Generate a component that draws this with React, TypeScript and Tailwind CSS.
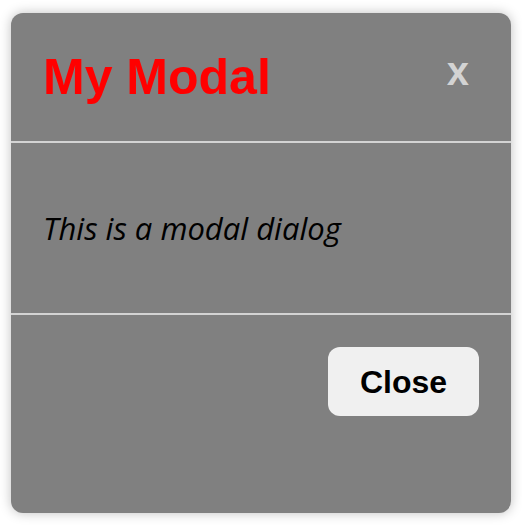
import React from 'react';

export default function App() {
  return (
    <div className="w-full h-[526px] flex items-center justify-center bg-white">
      <div className="w-[500px] h-[500px] rounded-xl bg-[#808080] shadow-[0_0_12px_rgba(0,0,0,0.25)] flex flex-col">
        {/* Header */}
        <div className="h-[128px] flex items-center justify-between px-8">
          <h1 className="text-[50px] font-bold text-[#ff0000] font-['Liberation_Sans',Arial,sans-serif] leading-none">
            My Modal
          </h1>
          <button className="text-[40px] font-bold text-[#d3d3d3] font-['Liberation_Sans',Arial,sans-serif] leading-none pb-3 mr-[10px]">
            x
          </button>
        </div>

        {/* Body */}
        <div className="h-[174px] flex items-center px-8 border-y-2 border-[#d3d3d3]">
          <p className="italic text-[31px] text-black font-['Open_Sans',sans-serif]">
            This is a modal dialog
          </p>
        </div>

        {/* Footer */}
        <div className="flex justify-end px-8 pt-8">
          <button className="w-[151px] h-[69px] rounded-xl bg-[#f0f0f0] text-black text-[32px] font-bold font-['Liberation_Sans',Arial,sans-serif]">
            Close
          </button>
        </div>
      </div>
    </div>
  );
}
